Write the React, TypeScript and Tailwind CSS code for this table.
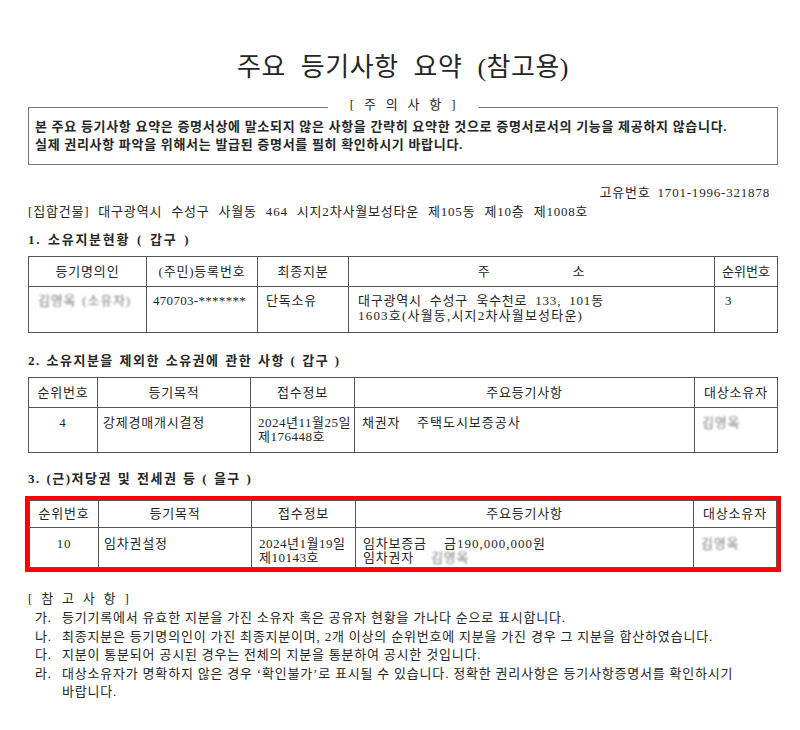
const fontStack = { fontFamily: '"Liberation Serif", "Noto Sans CJK KR", serif' }

const th = 'border border-[#555] text-center font-normal align-middle p-0'
const td = 'border border-[#555] align-top px-[7px]'

const Blur = ({ children }: { children: React.ReactNode }) => (
  <span className="select-none text-[#7a7a7a] blur-[1.2px]">{children}</span>
)

type RightsRow = { no: string; purpose: string; date: string[]; main: React.ReactNode; owner: React.ReactNode }

const RightsTable = ({ headerH, dataH, padTop, row }: { headerH: string; dataH: string; padTop: string; row: RightsRow }) => (
  <table className="w-full table-fixed border-collapse">
    <colgroup>
      <col className="w-[69px]" />
      <col className="w-[153px]" />
      <col className="w-[104px]" />
      <col />
      <col className="w-[83px]" />
    </colgroup>
    <thead>
      <tr className={headerH}>
        <th className={th}>순위번호</th>
        <th className={th}>등기목적</th>
        <th className={th}>접수정보</th>
        <th className={th}>주요등기사항</th>
        <th className={th}>대상소유자</th>
      </tr>
    </thead>
    <tbody>
      <tr className={`${dataH} leading-[14px]`}>
        <td className={`${td} ${padTop} text-center`}>{row.no}</td>
        <td className={`${td} ${padTop} pl-[5px] text-left`}>{row.purpose}</td>
        <td className={`${td} ${padTop} whitespace-nowrap pl-[7px] pr-0 text-left tracking-[0.5px]`}>
          {row.date[0]}
          <br />
          {row.date[1]}
        </td>
        <td className={`${td} ${padTop} whitespace-nowrap text-left`}>{row.main}</td>
        <td className={`${td} ${padTop} text-left`}>{row.owner}</td>
      </tr>
    </tbody>
  </table>
)

export default function App() {
  return (
    <div
      className="min-h-[730px] w-[800px] bg-white text-[13px] leading-[18px] tracking-[0.8px] text-[#262626] [word-spacing:2px]"
      style={fontStack}
    >
      <div className="mx-[28px] w-[750px] pt-[52px]">
        <h1 className="text-center text-[26px] font-normal leading-[32px] tracking-[0.5px] [word-spacing:8px]">
          주요 등기사항 요약 (참고용)
        </h1>

        <div className="relative mt-[23px] border border-[#777] px-[6px] pb-[10px] pt-[10px] font-bold tracking-[0.7px] [word-spacing:0px]">
          <div className="absolute -top-[12px] left-1/2 -translate-x-1/2 whitespace-pre bg-white px-[22px] font-normal tracking-[0.8px] [word-spacing:5px]">
            [ 주 의 사 항 ]
          </div>
          <p>본 주요 등기사항 요약은 증명서상에 말소되지 않은 사항을 간략히 요약한 것으로 증명서로서의 기능을 제공하지 않습니다.</p>
          <p>실제 권리사항 파악을 위해서는 발급된 증명서를 필히 확인하시기 바랍니다.</p>
        </div>

        <div className="mt-[19px] pr-[8px] text-right [word-spacing:3px]">고유번호 1701-1996-321878</div>
        <div className="mt-[1px] [word-spacing:5px]">[집합건물] 대구광역시 수성구 사월동 464 시지2차사월보성타운 제105동 제10층 제1008호</div>

        <h2 className="mt-[10px] font-bold tracking-[1.7px] [word-spacing:2px]">1. 소유지분현황 ( 갑구 )</h2>
        <table className="mt-[7px] w-full table-fixed border-collapse">
          <colgroup>
            <col className="w-[118px]" />
            <col className="w-[111px]" />
            <col className="w-[91px]" />
            <col />
            <col className="w-[63px]" />
          </colgroup>
          <thead>
            <tr className="h-[30px]">
              <th className={th}>등기명의인</th>
              <th className={`${th} whitespace-nowrap`}>(주민)등록번호</th>
              <th className={th}>최종지분</th>
              <th className={th}>
                <div className="flex justify-center gap-[82px]">
                  <span>주</span>
                  <span>소</span>
                </div>
              </th>
              <th className={`${th} whitespace-nowrap tracking-[0px]`}>순위번호</th>
            </tr>
          </thead>
          <tbody>
            <tr className="h-[46px] leading-[15px]">
              <td className={`${td} pt-[6px] pl-[9px]`}>
                <Blur>김영옥 (소유자)</Blur>
              </td>
              <td className={`${td} whitespace-nowrap pt-[6px] pl-[6px] tracking-[0.3px]`}>470703-*******</td>
              <td className={`${td} pt-[6px] pl-[8px]`}>단독소유</td>
              <td className={`${td} whitespace-nowrap pt-[6px] pl-[9px]`}>
                <span className="[word-spacing:4px]">대구광역시 수성구 욱수천로 133, 101동</span>
                <br />
                <span className="tracking-[1.2px]">1603호(사월동,시지2차사월보성타운)</span>
              </td>
              <td className={`${td} pt-[6px] pl-[10px]`}>3</td>
            </tr>
          </tbody>
        </table>

        <h2 className="mt-[19px] font-bold tracking-[1.5px] [word-spacing:1px]">2. 소유지분을 제외한 소유권에 관한 사항 ( 갑구 )</h2>
        <div className="mt-[7px]">
          <RightsTable
            headerH="h-[30px]"
            dataH="h-[45px]"
            padTop="pt-[8px]"
            row={{
              no: '4',
              purpose: '강제경매개시결정',
              date: ['2024년11월25일', '제176448호'],
              main: (
                <>
                  <span className="inline-block w-[55px]">채권자</span>
                  <span className="tracking-[1px]">주택도시보증공사</span>
                </>
              ),
              owner: <Blur>김영옥</Blur>,
            }}
          />
        </div>

        <h2 className="mt-[17px] font-bold tracking-[1.5px] [word-spacing:1px]">3. (근)저당권 및 전세권 등 ( 을구 )</h2>
        <div className="-mx-[3px] mt-[8px] border-4 border-[#f00]">
          <RightsTable
            headerH="h-[27px]"
            dataH="h-[40px]"
            padTop="pt-[9px]"
            row={{
              no: '10',
              purpose: '임차권설정',
              date: ['2024년1월19일', '제10143호'],
              main: (
                <>
                  <span className="inline-block w-[81px]">임차보증금</span>
                  <span className="tracking-[1px]">금190,000,000원</span>
                  <br />
                  <span className="inline-block w-[68px]">임차권자</span>
                  <Blur>김영옥</Blur>
                </>
              ),
              owner: <Blur>김영옥</Blur>,
            }}
          />
        </div>

        <div className="mt-[18px] whitespace-pre [word-spacing:4px]">[ 참 고 사 항 ]</div>
        <ul className="mt-[1px] pl-[7px] leading-[18.5px] [word-spacing:0px]">
          <li className="flex">
            <span className="w-[27px] shrink-0">가.</span>
            <span>등기기록에서 유효한 지분을 가진 소유자 혹은 공유자 현황을 가나다 순으로 표시합니다.</span>
          </li>
          <li className="flex">
            <span className="w-[27px] shrink-0">나.</span>
            <span>최종지분은 등기명의인이 가진 최종지분이며, 2개 이상의 순위번호에 지분을 가진 경우 그 지분을 합산하였습니다.</span>
          </li>
          <li className="flex">
            <span className="w-[27px] shrink-0">다.</span>
            <span>지분이 통분되어 공시된 경우는 전체의 지분을 통분하여 공시한 것입니다.</span>
          </li>
          <li className="flex">
            <span className="w-[27px] shrink-0">라.</span>
            <span className="whitespace-nowrap">
              대상소유자가 명확하지 않은 경우 ‘확인불가’로 표시될 수 있습니다. 정확한 권리사항은 등기사항증명서를 확인하시기
              <br />
              바랍니다.
            </span>
          </li>
        </ul>
      </div>
    </div>
  )
}
